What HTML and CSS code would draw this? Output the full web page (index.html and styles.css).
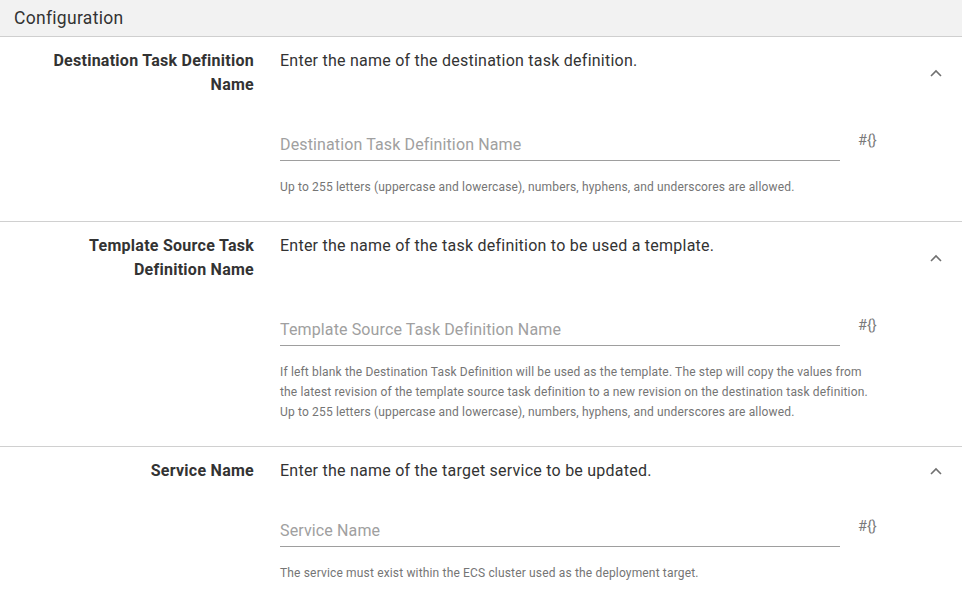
FILE: index.html
```html
<!DOCTYPE html>
<html>
<head>
<meta charset="utf-8">
<link rel="stylesheet" href="styles.css">
</head>
<body>
<div class="panel">
  <div class="panel-header">Configuration</div>

  <div class="section">
    <div class="head">
      <div class="label">Destination Task Definition Name</div>
      <div class="desc">Enter the name of the destination task definition.</div>
      <div class="chev"><svg width="14" height="14" viewBox="0 0 14 14"><path d="M2 10 L7 5 L12 10" fill="none" stroke="#707070" stroke-width="1.6"/></svg></div>
    </div>
    <div class="body">
      <div class="field-row">
        <div class="field"><span class="placeholder">Destination Task Definition Name</span></div>
        <div class="bind">#{}</div>
      </div>
      <div class="help">Up to 255 letters (uppercase and lowercase), numbers, hyphens, and underscores are allowed.</div>
    </div>
  </div>

  <div class="section">
    <div class="head">
      <div class="label">Template Source Task Definition Name</div>
      <div class="desc">Enter the name of the task definition to be used a template.</div>
      <div class="chev"><svg width="14" height="14" viewBox="0 0 14 14"><path d="M2 10 L7 5 L12 10" fill="none" stroke="#707070" stroke-width="1.6"/></svg></div>
    </div>
    <div class="body">
      <div class="field-row">
        <div class="field"><span class="placeholder">Template Source Task Definition Name</span></div>
        <div class="bind">#{}</div>
      </div>
      <div class="help">If left blank the Destination Task Definition will be used as the template. The step will copy the values from the latest revision of the template source task definition to a new revision on the destination task definition. Up to 255 letters (uppercase and lowercase), numbers, hyphens, and underscores are allowed.</div>
    </div>
  </div>

  <div class="section">
    <div class="head">
      <div class="label">Service Name</div>
      <div class="desc">Enter the name of the target service to be updated.</div>
      <div class="chev"><svg width="14" height="14" viewBox="0 0 14 14"><path d="M2 10 L7 5 L12 10" fill="none" stroke="#707070" stroke-width="1.6"/></svg></div>
    </div>
    <div class="body">
      <div class="field-row">
        <div class="field"><span class="placeholder">Service Name</span></div>
        <div class="bind">#{}</div>
      </div>
      <div class="help">The service must exist within the ECS cluster used as the deployment target.</div>
    </div>
  </div>
</div>
</body>
</html>
```
FILE: styles.css
```css
html, body {
  margin: 0;
  padding: 0;
  background: #ffffff;
}
body {
  font-family: Roboto, "Liberation Sans", sans-serif;
  color: #333333;
}
.panel-header {
  height: 36px;
  line-height: 36px;
  padding-left: 14px;
  font-size: 17.5px;
  letter-spacing: 0.3px;
  background: #f2f2f2;
  border-bottom: 1px solid #cfcfcf;
  color: #333;
}
.section {
  border-bottom: 1px solid #d0d0d0;
  padding: 12px 0 24px 0;
}
.head {
  display: flex;
  align-items: center;
}
.label {
  width: 220px;
  margin-left: 34px;
  text-align: right;
  font-weight: 700;
  font-size: 16px;
  line-height: 24px;
  letter-spacing: 0.26px;
  color: #333;
}
.desc {
  align-self: flex-start;
  flex: 1;
  margin-left: 26px;
  font-size: 16px;
  line-height: 24px;
  letter-spacing: 0.24px;
  color: #333;
}
.chev {
  width: 14px;
  height: 14px;
  margin-right: 19px;
  display: flex;
}
.body {
  margin-left: 280px;
  width: 600px;
}
.field-row {
  display: flex;
  align-items: flex-start;
  margin-top: 36px;
}
.field {
  width: 560px;
  border-bottom: 1px solid #9e9e9e;
  padding-bottom: 3px;
  font-size: 16px;
  line-height: 24px;
  letter-spacing: 0.13px;
}
.placeholder {
  color: #a0a0a0;
}
.bind {
  margin-left: 18px;
  margin-top: -2px;
  font-size: 14.5px;
  line-height: 20px;
  color: #7a7a7a;
}
.help {
  margin-top: 16px;
  font-size: 12px;
  line-height: 20px;
  letter-spacing: 0.16px;
  color: #757575;
}
```
